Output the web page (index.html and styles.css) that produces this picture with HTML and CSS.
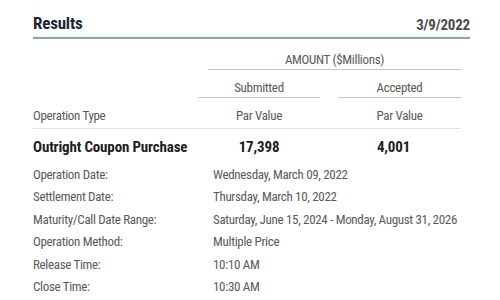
FILE: index.html
```html
<!DOCTYPE html>
<html>
<head>
<meta charset="utf-8">
<link rel="stylesheet" href="styles.css">
</head>
<body>
<div class="panel">
  <div class="header">
    <h1 class="title">Results</h1>
    <span class="date">3/9/2022</span>
  </div>
  <div class="row amount-row">
    <div class="amount">AMOUNT ($Millions)</div>
  </div>
  <div class="row sub-row">
    <div></div>
    <div class="colhead c2">Submitted</div>
    <div></div>
    <div class="colhead c4">Accepted</div>
  </div>
  <div class="row par-row">
    <div class="label">Operation Type</div>
    <div class="center">Par Value</div>
    <div></div>
    <div class="center">Par Value</div>
  </div>
  <div class="row main-row">
    <div class="optype">Outright Coupon Purchase</div>
    <div class="num">17,398</div>
    <div></div>
    <div class="num num2">4,001</div>
  </div>
  <div class="details">
    <div class="dl">Operation Date:</div><div class="dv">Wednesday, March 09, 2022</div>
    <div class="dl">Settlement Date:</div><div class="dv">Thursday, March 10, 2022</div>
    <div class="dl">Maturity/Call Date Range:</div><div class="dv">Saturday, June 15, 2024 - Monday, August 31, 2026</div>
    <div class="dl">Operation Method:</div><div class="dv">Multiple Price</div>
    <div class="dl">Release Time:</div><div class="dv">10:10 AM</div>
    <div class="dl">Close Time:</div><div class="dv">10:30 AM</div>
  </div>
</div>
</body>
</html>
```
FILE: styles.css
```css
html, body {
  margin: 0;
  padding: 0;
  background: #ffffff;
}
body {
  font-family: Roboto, "Liberation Sans", sans-serif;
  font-stretch: condensed;
  color: #5a5a5a;
  font-size: 13px;
  letter-spacing: -0.32px;
}
.panel {
  width: 437px;
  padding: 0 0 0 33px;
}
.header {
  display: flex;
  justify-content: space-between;
  align-items: flex-end;
  height: 37px;
  border-bottom: 2px solid #8ea3aa;
  box-shadow: 0 -3px 4px -2px #e6f3f4 inset;
}
.title {
  margin: 0;
  font-size: 17px;
  font-weight: 700;
  color: #1c2733;
  line-height: 20px;
  padding-bottom: 4px;
  letter-spacing: -0.2px;
}
.date {
  font-size: 15px;
  font-weight: 700;
  color: #4a4a4a;
  line-height: 18px;
  padding-bottom: 3px;
  letter-spacing: -0.2px;
}
.row {
  display: grid;
  grid-template-columns: 165px 122px 18px 123px;
  width: 428px;
}
.amount-row {
  margin-top: 13px;
}
.amount {
  grid-column: 2 / 5;
  margin-left: 10px;
  text-align: center;
  line-height: 16px;
  padding-bottom: 1px;
  border-bottom: 1px solid #c9c9c9;
}
.sub-row {
  margin-top: 10px;
}
.colhead {
  text-align: center;
  line-height: 16px;
  padding-bottom: 1px;
  border-bottom: 1px solid #c9c9c9;
}
.par-row {
  margin-top: 10px;
  border-bottom: 1px solid #e1e1e1;
  line-height: 16px;
  padding-bottom: 4px;
}
.center {
  text-align: center;
}
.main-row {
  margin-top: 9px;
  line-height: 18px;
  font-weight: 700;
  color: #1e1e1e;
  font-size: 15px;
  letter-spacing: -0.15px;
}
.num {
  text-align: center;
}
.num2 {
  padding-right: 12px;
}
.details {
  display: grid;
  grid-template-columns: 180px 1fr;
  margin-top: 8px;
  line-height: 22.4px;
}
```
